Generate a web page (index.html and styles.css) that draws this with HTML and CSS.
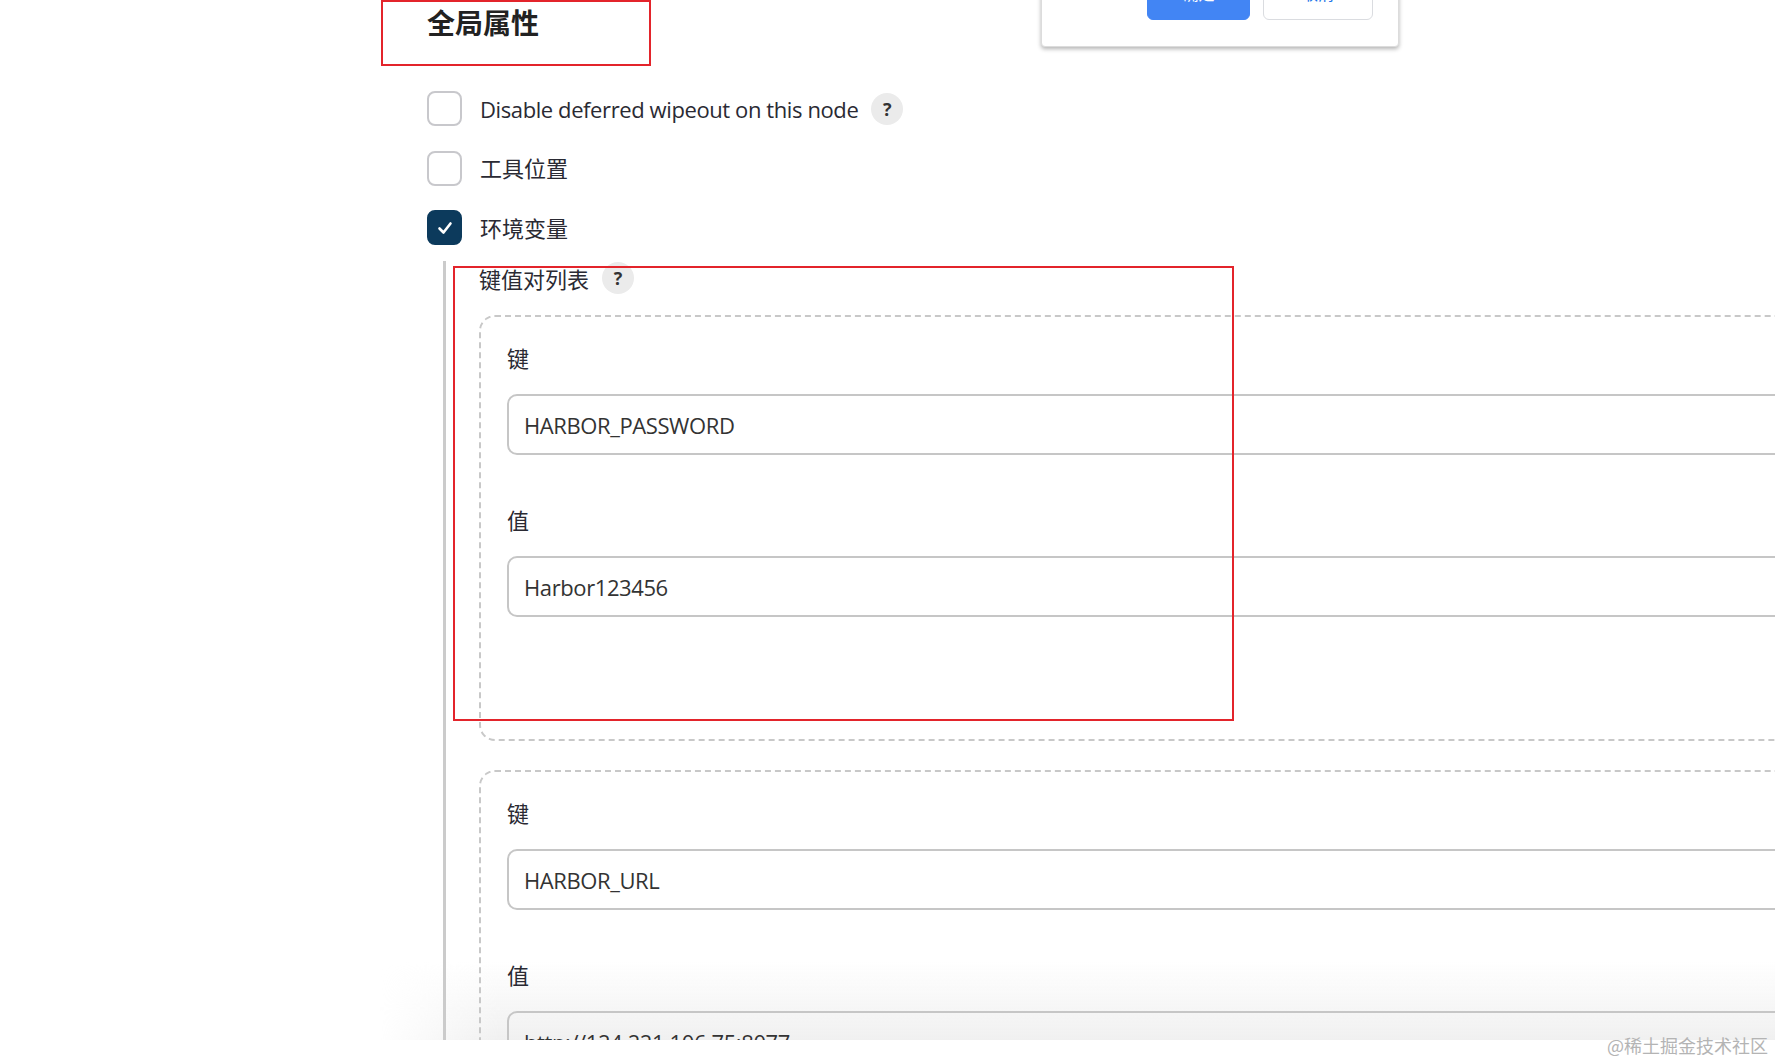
FILE: index.html
```html
<!doctype html>
<html lang="zh-CN">
<head>
    <meta charset="UTF-8">
    <title>全局属性</title>
    <link rel="stylesheet" href="styles.css">
</head>
<body>
    <div class="page">
        <div class="bottom-fade"></div>

        <div class="content">
            <h2 class="section-title">全局属性</h2>

            <div class="options">
                <div class="option">
                    <span class="checkbox"></span>
                    <span class="option-label latin">Disable deferred wipeout on this node</span>
                    <span class="help">?</span>
                </div>
                <div class="option">
                    <span class="checkbox"></span>
                    <span class="option-label">工具位置</span>
                </div>
                <div class="option">
                    <span class="checkbox is-checked">
                        <svg width="20" height="20" viewBox="0 0 20 20"><polyline points="4.5,10.5 8.5,14.5 15.5,5.5" fill="none" stroke="#fff" stroke-width="2.6" stroke-linecap="round" stroke-linejoin="round"/></svg>
                    </span>
                    <span class="option-label">环境变量</span>
                </div>
            </div>

            <div class="nested">
                <div class="nested-title">键值对列表 <span class="help">?</span></div>

                <div class="repeated">
                    <div class="field">
                        <div class="field-label">键</div>
                        <div class="input latin">HARBOR_PASSWORD</div>
                    </div>
                    <div class="field">
                        <div class="field-label">值</div>
                        <div class="input latin">Harbor123456</div>
                    </div>
                </div>

                <div class="repeated">
                    <div class="field">
                        <div class="field-label">键</div>
                        <div class="input latin">HARBOR_URL</div>
                    </div>
                    <div class="field">
                        <div class="field-label">值</div>
                        <div class="input latin">http://124.221.106.75:8077</div>
                    </div>
                </div>
            </div>
        </div>

        <div class="dialog">
            <div class="dlg-btn primary">确定</div>
            <div class="dlg-btn">取消</div>
        </div>

        <!-- annotation boxes -->
        <div class="mark mark-title"></div>
        <div class="mark mark-list"></div>
    </div>
    <div class="watermark">@稀土掘金技术社区</div>
</body>
</html>
```

FILE: styles.css
```css
* {
    margin: 0;
    padding: 0;
    box-sizing: border-box;
}

html, body {
    width: 1775px;
    height: 1060px;
    overflow: hidden;
    background: #fff;
}

body {
    font-family: "Open Sans", "Noto Sans CJK SC", sans-serif;
    font-size: 22px;
    color: #2a2a33;
}

.latin {
    letter-spacing: -0.4px;
}

.page {
    position: relative;
    height: 1040px;
    overflow: hidden;
}

.content {
    position: relative;
    padding-left: 427px;
    width: 2000px;
}

.section-title {
    font-size: 28px;
    font-weight: bold;
    line-height: 46px;
    color: #222;
}

.options {
    padding-top: 45px;
}

.option {
    display: flex;
    align-items: center;
    height: 35px;
    margin-bottom: 24.5px;
}

.checkbox {
    width: 35px;
    height: 35px;
    border: 2.5px solid #c8c8cc;
    border-radius: 8px;
    display: flex;
    align-items: center;
    justify-content: center;
    margin-right: 18px;
    flex-shrink: 0;
}

.checkbox.is-checked {
    background: #0c3a5c;
    border-color: #0c3a5c;
}

.option-label {
    line-height: 30px;
}

.help {
    display: inline-flex;
    align-items: center;
    justify-content: center;
    width: 32px;
    height: 32px;
    border-radius: 50%;
    background: #ebebeb;
    font-size: 18px;
    font-weight: bold;
    color: #333;
    margin-left: 13px;
}

.nested {
    margin-top: -9px;
    margin-left: 16px;
    border-left: 3px solid #cbcbcb;
    padding-left: 33px;
}

.nested-title {
    display: flex;
    align-items: center;
    height: 34px;
    margin-bottom: 20px;
}

.repeated {
    border: 2px dashed #c8c8c8;
    border-radius: 16px;
    padding: 26px 0 122px 26px;
    margin-bottom: 29px;
}

.field-label {
    line-height: 30px;
    margin-bottom: 21px;
}

.field + .field {
    margin-top: 50px;
}

.input {
    height: 61px;
    border: 2px solid #c6c6c6;
    border-radius: 10px;
    padding-left: 15px;
    line-height: 58px;
    color: #333;
}

.bottom-fade {
    position: absolute;
    left: 380px;
    right: 0;
    top: 960px;
    height: 80px;
    background: linear-gradient(rgba(240, 240, 240, 0), rgba(238, 238, 238, 0.85));
    -webkit-mask-image: linear-gradient(to right, transparent, #000 120px);
    mask-image: linear-gradient(to right, transparent, #000 120px);
}

.dialog {
    position: absolute;
    left: 1041px;
    top: -40px;
    width: 358px;
    height: 87px;
    background: #fff;
    border: 1px solid #dcdcdc;
    border-radius: 4px;
    box-shadow: 0 2px 4px rgba(0, 0, 0, 0.3);
    display: flex;
    justify-content: flex-end;
    align-items: flex-end;
    gap: 13px;
    padding: 0 25px 26px 0;
}

.dlg-btn {
    width: 110px;
    height: 50px;
    border: 1px solid #dadce0;
    border-radius: 6px;
    background: #fff;
    color: #1a73e8;
    font-size: 16px;
    line-height: 18px;
    display: flex;
    align-items: flex-end;
    justify-content: center;
    padding-bottom: 16px;
}

.dlg-btn.primary {
    width: 103px;
    background: #4285f4;
    border-color: #4285f4;
    color: #fff;
}

.mark {
    position: absolute;
    border: 2px solid #e3242b;
}

.mark-title {
    left: 381px;
    top: 0;
    width: 270px;
    height: 66px;
}

.mark-list {
    left: 453px;
    top: 266px;
    width: 781px;
    height: 455px;
}

.watermark {
    position: absolute;
    right: 7px;
    top: 1033px;
    font-family: "Noto Sans CJK SC", sans-serif;
    font-size: 18px;
    line-height: 24px;
    color: #b4b4b4;
}
```
